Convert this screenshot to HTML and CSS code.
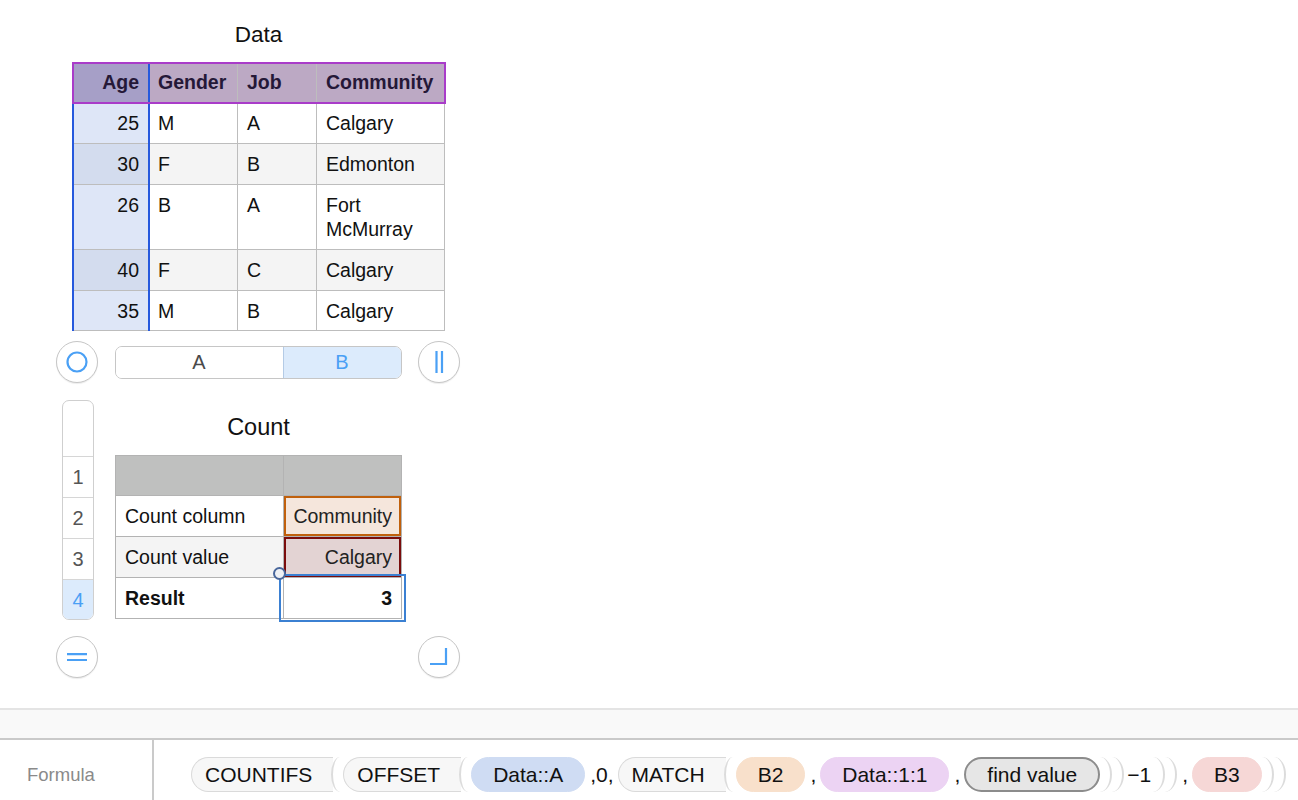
FILE: index.html
```html
<!DOCTYPE html>
<html lang="en">
<head>
<meta charset="utf-8">
<title>Numbers – Data and Count</title>
<link rel="stylesheet" href="styles.css">
</head>
<body>
<div class="app">
  <main class="canvas">
    <section class="data-sheet">
      <h2 class="sheet-title data-title">Data</h2>
      <div class="data-table">
        <div class="cell hdr hdr-age num">Age</div>
        <div class="cell hdr">Gender</div>
        <div class="cell hdr">Job</div>
        <div class="cell hdr">Community</div>

        <div class="cell age num">25</div>
        <div class="cell">M</div>
        <div class="cell">A</div>
        <div class="cell">Calgary</div>

        <div class="cell age age-alt num">30</div>
        <div class="cell alt">F</div>
        <div class="cell alt">B</div>
        <div class="cell alt">Edmonton</div>

        <div class="cell age num">26</div>
        <div class="cell">B</div>
        <div class="cell">A</div>
        <div class="cell">Fort<br>McMurray</div>

        <div class="cell age age-alt num">40</div>
        <div class="cell alt">F</div>
        <div class="cell alt">C</div>
        <div class="cell alt">Calgary</div>

        <div class="cell age num">35</div>
        <div class="cell">M</div>
        <div class="cell">B</div>
        <div class="cell">Calgary</div>

        <div class="sel-col"></div>
        <div class="sel-row"></div>
      </div>
    </section>

    <div class="controls">
      <button class="round-btn" aria-label="Select table">
        <svg width="24" height="24" viewBox="0 0 24 24"><circle cx="12" cy="12" r="9.5" fill="none" stroke="#4aa0f5" stroke-width="2.2"/></svg>
      </button>
      <div class="segmented">
        <span class="seg">A</span>
        <span class="seg seg-active">B</span>
      </div>
      <button class="round-btn" aria-label="Add column">
        <svg width="24" height="26" viewBox="0 0 24 26"><path d="M9.5 2 V24 M15 2 V24" stroke="#4aa0f5" stroke-width="2.2" fill="none"/></svg>
      </button>
    </div>

    <div class="count-area">
      <div class="row-header">
        <div class="rh-cell rh-blank"></div>
        <div class="rh-cell">1</div>
        <div class="rh-cell">2</div>
        <div class="rh-cell">3</div>
        <div class="rh-cell rh-active">4</div>
      </div>
      <section class="count-sheet">
        <h2 class="sheet-title count-title">Count</h2>
        <div class="count-table">
          <div class="cell c-hdr"></div>
          <div class="cell c-hdr"></div>

          <div class="cell">Count column</div>
          <div class="cell num ref-orange">Community</div>

          <div class="cell alt">Count value</div>
          <div class="cell num ref-red">Calgary</div>

          <div class="cell bold">Result</div>
          <div class="cell num bold">3</div>

          <div class="cell-select"></div>
          <div class="select-handle"></div>
        </div>
      </section>
    </div>

    <div class="bottom-controls">
      <button class="round-btn" aria-label="Add row">
        <svg width="24" height="24" viewBox="0 0 24 24"><path d="M2 9.2 H22 M2 15 H22" stroke="#4aa0f5" stroke-width="2.2" fill="none"/></svg>
      </button>
      <button class="round-btn" aria-label="Resize">
        <svg width="24" height="24" viewBox="0 0 24 24"><path d="M19 3 V19 H3" stroke="#4aa0f5" stroke-width="2.2" fill="none"/></svg>
      </button>
    </div>
  </main>

  <div class="gutter"></div>

  <footer class="formula-bar">
    <div class="formula-label">Formula</div>
    <div class="formula-tokens">
      <span class="fn">COUNTIFS</span><span class="open"></span>
      <span class="fn">OFFSET</span><span class="open"></span>
      <span class="ref ref-blue">Data::A</span>
      <span class="txt">,0,</span>
      <span class="fn">MATCH</span><span class="open"></span>
      <span class="ref ref-peach">B2</span>
      <span class="txt">,</span>
      <span class="ref ref-lilac">Data::1:1</span>
      <span class="txt">,</span>
      <span class="ref ref-placeholder">find value</span>
      <span class="close"></span><span class="close"></span>
      <span class="txt minus">−1</span>
      <span class="close"></span><span class="close"></span>
      <span class="txt">,</span>
      <span class="ref ref-pink">B3</span>
      <span class="close"></span><span class="close"></span>
    </div>
  </footer>
</div>
</body>
</html>
```

FILE: styles.css
```css
* { box-sizing: border-box; }

html, body {
  margin: 0;
  padding: 0;
  overflow: hidden;
  background: #ffffff;
  font-family: "Liberation Sans", Arial, sans-serif;
  color: #111;
}

.app {
  width: 1298px;
  height: 800px;
  display: flex;
  flex-direction: column;
}

.canvas {
  height: 708px;
  padding-top: 22px;
  display: flex;
  flex-direction: column;
}

.sheet-title {
  margin: 0;
  font-weight: normal;
  text-align: center;
  color: #111;
}

/* ---------- Data table ---------- */
.data-sheet {
  margin-left: 72px;
  width: 373px;
}

.data-title {
  font-size: 22.5px;
  line-height: 26px;
  margin-bottom: 14px;
}

.data-table {
  position: relative;
  display: grid;
  grid-template-columns: 76px 89px 79px 128px;
  grid-template-rows: 40px 41px 41px 65px 41px 40px;
  border-left: 1px solid #bdbdbd;
  border-top: 1px solid #bdbdbd;
  width: 373px;
}

.cell {
  border-right: 1px solid #bdbdbd;
  border-bottom: 1px solid #bdbdbd;
  padding: 8px 8px 0 9px;
  font-size: 19.5px;
  line-height: 24px;
  background: #fff;
  white-space: nowrap;
}

.cell.num { text-align: right; padding-right: 9px; }
.cell.alt { background: #f4f4f4; }

.hdr {
  background: #bca9c4;
  font-weight: bold;
  color: #251838;
  padding-top: 7px;
}
.hdr-age { background: #a69fc7; }

.age { background: #dee6f7; }
.age-alt { background: #d3dcee; }

.sel-col {
  position: absolute;
  left: -1px;
  top: -1px;
  bottom: 0;
  width: 78px;
  border-left: 2px solid #2659dd;
  border-right: 2px solid #2659dd;
  pointer-events: none;
}

.sel-row {
  position: absolute;
  left: -1px;
  top: -1px;
  right: -1px;
  height: 42px;
  border: 2px solid #a93cc9;
  pointer-events: none;
}

/* ---------- round buttons ---------- */
.round-btn {
  width: 42px;
  height: 42px;
  padding: 0;
  border-radius: 50%;
  border: 1px solid #c6c6c6;
  background: #fff;
  box-shadow: 0 1px 1px rgba(0,0,0,0.08);
  display: flex;
  align-items: center;
  justify-content: center;
}

.controls {
  margin-top: 10px;
  margin-left: 56px;
  width: 404px;
  display: flex;
  align-items: center;
  justify-content: space-between;
}

.segmented {
  width: 287px;
  height: 33px;
  display: flex;
  border: 1px solid #c6c6c6;
  border-radius: 7px;
  overflow: hidden;
  font-size: 20px;
}

.seg {
  width: 167px;
  display: flex;
  align-items: center;
  justify-content: center;
  color: #4a4a4a;
  background: #fff;
}

.seg-active {
  width: 118px;
  color: #4aa0f5;
  background: #dcebfc;
  border-left: 1px solid #b4cbe6;
}

/* ---------- Count area ---------- */
.count-area {
  margin-top: 17px;
  margin-left: 62px;
  display: flex;
  gap: 21px;
}

.row-header {
  width: 32px;
  border: 1px solid #cfcfcf;
  border-radius: 7px;
  overflow: hidden;
  align-self: flex-start;
  background: #fff;
}

.rh-cell {
  height: 41px;
  border-top: 1px solid #d6d6d6;
  text-align: center;
  font-size: 20px;
  line-height: 40px;
  color: #555;
}

.rh-blank { height: 55px; border-top: none; }

.rh-active {
  background: #dcebfc;
  color: #4aa0f5;
  height: 40px;
}

.count-sheet { width: 287px; }

.count-title {
  font-size: 23.5px;
  line-height: 28px;
  padding-top: 13px;
  margin-bottom: 14px;
}

.count-table {
  position: relative;
  display: grid;
  grid-template-columns: 168px 118px;
  grid-template-rows: 40px 41px 41px 41px;
  border-left: 1px solid #b3b3b3;
  border-top: 1px solid #b3b3b3;
  width: 287px;
}

.count-table .cell {
  border-color: #b3b3b3;
}

.c-hdr { background: #bfc0bf; }

.ref-orange {
  background: #f5e6dc;
  box-shadow: inset 0 0 0 2px #c0600c;
  color: #222;
}

.ref-red {
  background: #e3d3d3;
  box-shadow: inset 0 0 0 2px #7a0c0c;
  color: #222;
}

.bold { font-weight: bold; }

.cell-select {
  position: absolute;
  left: 163px;
  top: 118px;
  width: 127px;
  height: 48px;
  border: 2px solid #3b80d2;
  pointer-events: none;
}

.select-handle {
  position: absolute;
  left: 157px;
  top: 111px;
  width: 13px;
  height: 13px;
  border-radius: 50%;
  border: 2px solid #48669b;
  background: #eef0f4;
}

.bottom-controls {
  margin-top: 16px;
  margin-left: 56px;
  width: 404px;
  display: flex;
  justify-content: space-between;
}

/* ---------- gutter & formula bar ---------- */
.gutter {
  height: 32px;
  background: #f9f9f9;
  border-top: 2px solid #e4e4e4;
  border-bottom: 2px solid #cacaca;
}

.formula-bar {
  height: 60px;
  display: flex;
}

.formula-label {
  width: 154px;
  border-right: 2px solid #cacaca;
  padding: 17px 0 0 27px;
  font-size: 18.5px;
  line-height: 35px;
  color: #8a8a8a;
}

.formula-tokens {
  padding: 17px 0 0 37px;
  display: flex;
  align-items: flex-start;
  font-size: 21px;
  color: #111;
}

.fn, .ref {
  height: 35px;
  line-height: 33px;
  white-space: nowrap;
}

.fn {
  background: #f7f7f7;
  border: 1px solid #dadada;
  border-right: none;
  border-radius: 18px 0 0 18px;
  padding: 0 21px 0 13px;
}

.open {
  width: 9px;
  height: 35px;
  border-left: 2px solid #dcdcdc;
  border-radius: 100% 0 0 100% / 50% 0 0 50%;
  margin-left: -2px;
  margin-right: 3px;
}

.close {
  width: 12px;
  height: 35px;
  border-right: 2px solid #dcdcdc;
  border-radius: 0 100% 100% 0 / 0 50% 50% 0;
}

.ref {
  border-radius: 18px;
  padding: 0 21px;
  border: 1px solid transparent;
}

.ref-blue { background: #cfdcf3; border-color: #cfdcf3; }
.ref-peach { background: #f8e0cb; border-color: #f8e0cb; }
.ref-lilac { background: #ecd3f3; border-color: #ecd3f3; }
.ref-pink { background: #f6d7d6; border-color: #f6d7d6; }

.ref-placeholder {
  background: #e6e6e6;
  border: 2px solid #8c8c8c;
  line-height: 31px;
  padding: 0 21px;
}

.txt {
  height: 35px;
  line-height: 35px;
  margin: 0 4px 0 5px;
  white-space: nowrap;
}

.minus { margin: 0 2px 0 3px; }
```
